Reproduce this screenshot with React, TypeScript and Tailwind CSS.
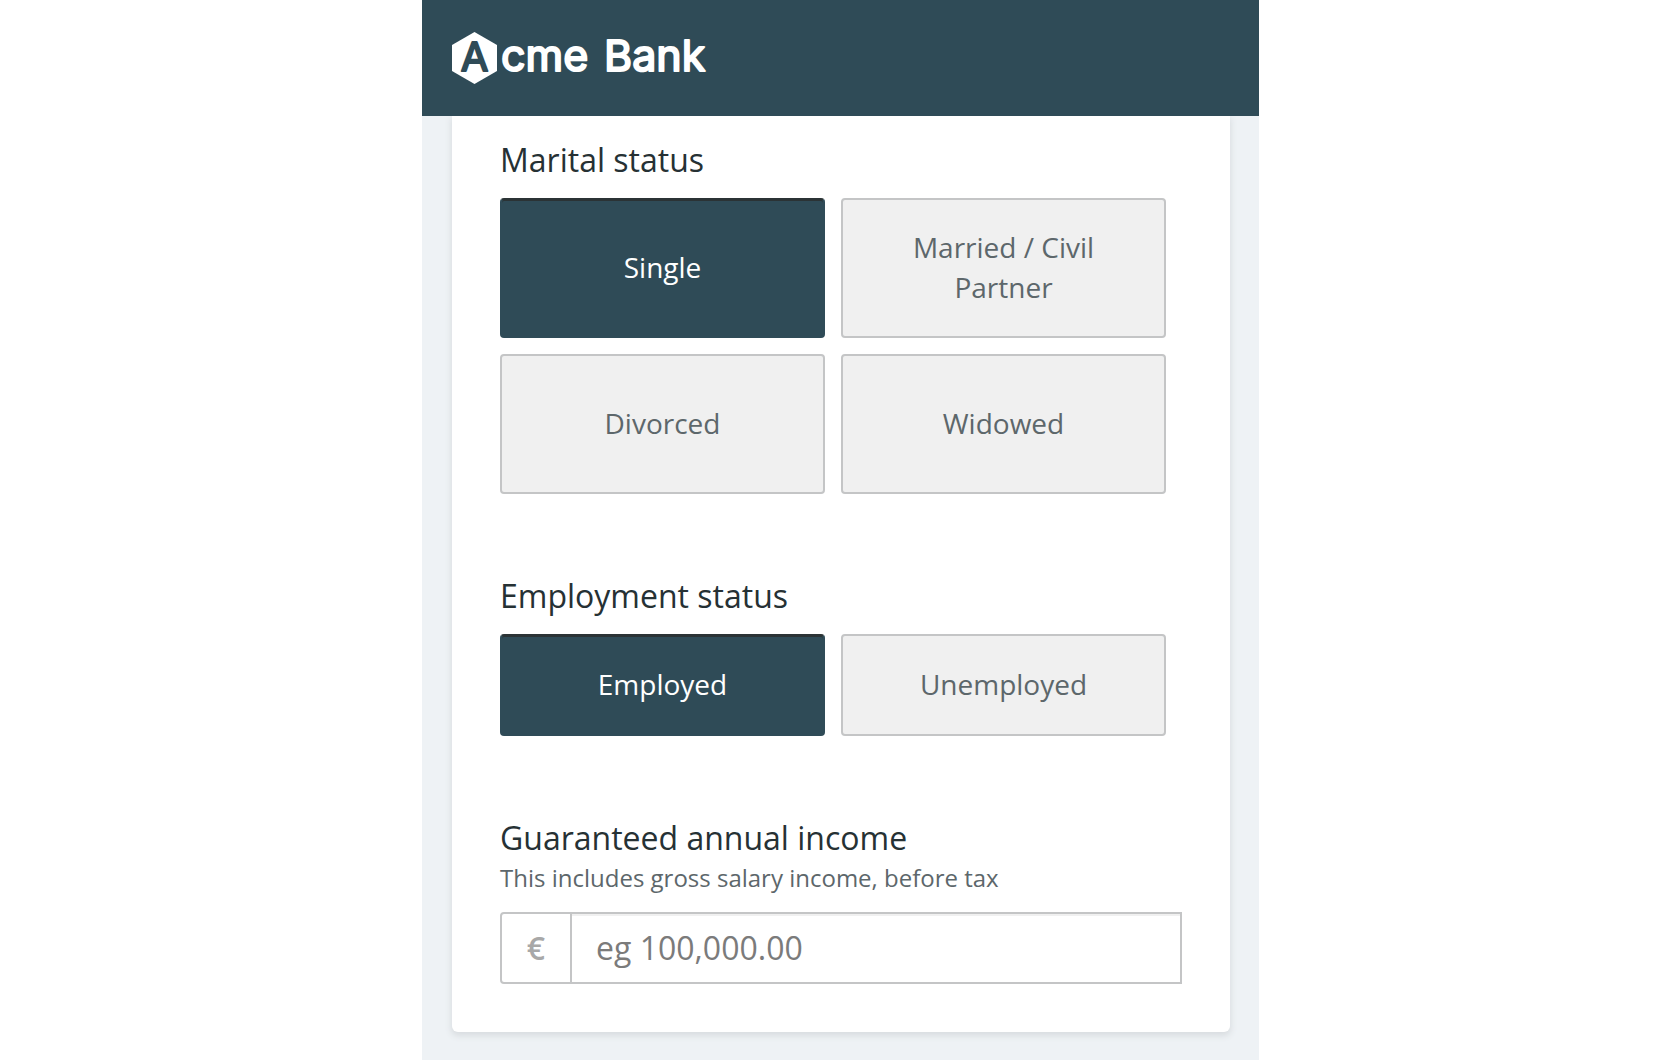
import { useState } from 'react';

type ChoiceProps = {
  id: string;
  title: string;
  options: string[];
  initial: string;
  rowClass: string;
};

function Logo() {
  return (
    <a href="#" aria-label="Acme Bank" className="block">
      <svg width="276" height="56" viewBox="0 -2 276 56" aria-hidden="true">
        <path d="M22.5 0 45 13v26L22.5 52 0 39V13z" fill="#fff" />
        <g fontFamily="Inter, sans-serif" strokeLinejoin="round" strokeWidth="2">
          <text x="22.5" y="39" textAnchor="middle" fontSize="40" fill="#2f4b57" stroke="#2f4b57">
            A
          </text>
          <text x="49" y="39" fontSize="43" fill="#fff" stroke="#fff">
            cme
          </text>
          <text x="152" y="39" fontSize="43" fill="#fff" stroke="#fff">
            Bank
          </text>
        </g>
      </svg>
    </a>
  );
}

function ChoiceGroup({ id, title, options, initial, rowClass }: ChoiceProps) {
  const [selected, setSelected] = useState(initial);
  return (
    <section role="group" aria-labelledby={id} className="mb-[82px]">
      <h2 id={id} className="mb-[18px] text-[32px] leading-10 text-[#263134]">
        {title}
      </h2>
      <div className={'grid grid-cols-2 gap-4 pr-4 ' + rowClass}>
        {options.map((option) => (
          <button
            key={option}
            type="button"
            aria-pressed={selected === option}
            onClick={() => setSelected(option)}
            className={
              'rounded-[4px] border-2 px-12 pb-0.5 text-[28px] leading-10 ' +
              (selected === option
                ? 'border-[#2f4b57] border-t-[#2b3335] bg-[#2f4b57] text-white shadow-[inset_0_1px_0_#2b3335]'
                : 'border-[#c4c5c6] bg-[#f0f0f0] text-[#5d676b]')
            }
          >
            {option}
          </button>
        ))}
      </div>
    </section>
  );
}

export default function App() {
  return (
    <div className="flex min-h-screen justify-center bg-white pl-px font-['Open_Sans',sans-serif]">
      <div className="flex w-full max-w-[837px] flex-col bg-[#eef2f5]">
        <header className="relative bg-[#2f4b57] px-[30px] py-[30px]">
          <Logo />
        </header>
        <main className="pr-[29px] pb-6 pl-[30px]">
          <form
            className="rounded-b-[6px] bg-white px-12 pt-6 pb-12 shadow-[0_3px_6px_1px_#d9dde0]"
            onSubmit={(e) => e.preventDefault()}
          >
            <ChoiceGroup
              id="marital"
              title="Marital status"
              options={['Single', 'Married / Civil Partner', 'Divorced', 'Widowed']}
              initial="Single"
              rowClass="auto-rows-[140px]"
            />
            <ChoiceGroup
              id="employment"
              title="Employment status"
              options={['Employed', 'Unemployed']}
              initial="Employed"
              rowClass="auto-rows-[102px]"
            />
            <label htmlFor="income" className="block text-[32px] leading-10 text-[#263134]">
              Guaranteed annual income
            </label>
            <p id="income-hint" className="mt-0.5 mb-4 text-2xl leading-9 text-[#5d676b]">
              This includes gross salary income, before tax
            </p>
            <div className="flex h-[72px] rounded-l-[4px] border-2 border-[#c4c5c6]">
              <span className="flex w-[70px] items-center justify-center border-r-2 border-[#c4c5c6] text-[32px] font-semibold text-[#a8a8a8]">
                €
              </span>
              <input
                id="income"
                type="text"
                inputMode="decimal"
                aria-describedby="income-hint"
                placeholder="eg 100,000.00"
                className="min-w-0 flex-1 px-6 text-[32px] text-[#263134] shadow-[inset_0_2px_0_#f0f0f0] outline-none placeholder:text-[#7b7b7b]"
              />
            </div>
          </form>
        </main>
      </div>
    </div>
  );
}
